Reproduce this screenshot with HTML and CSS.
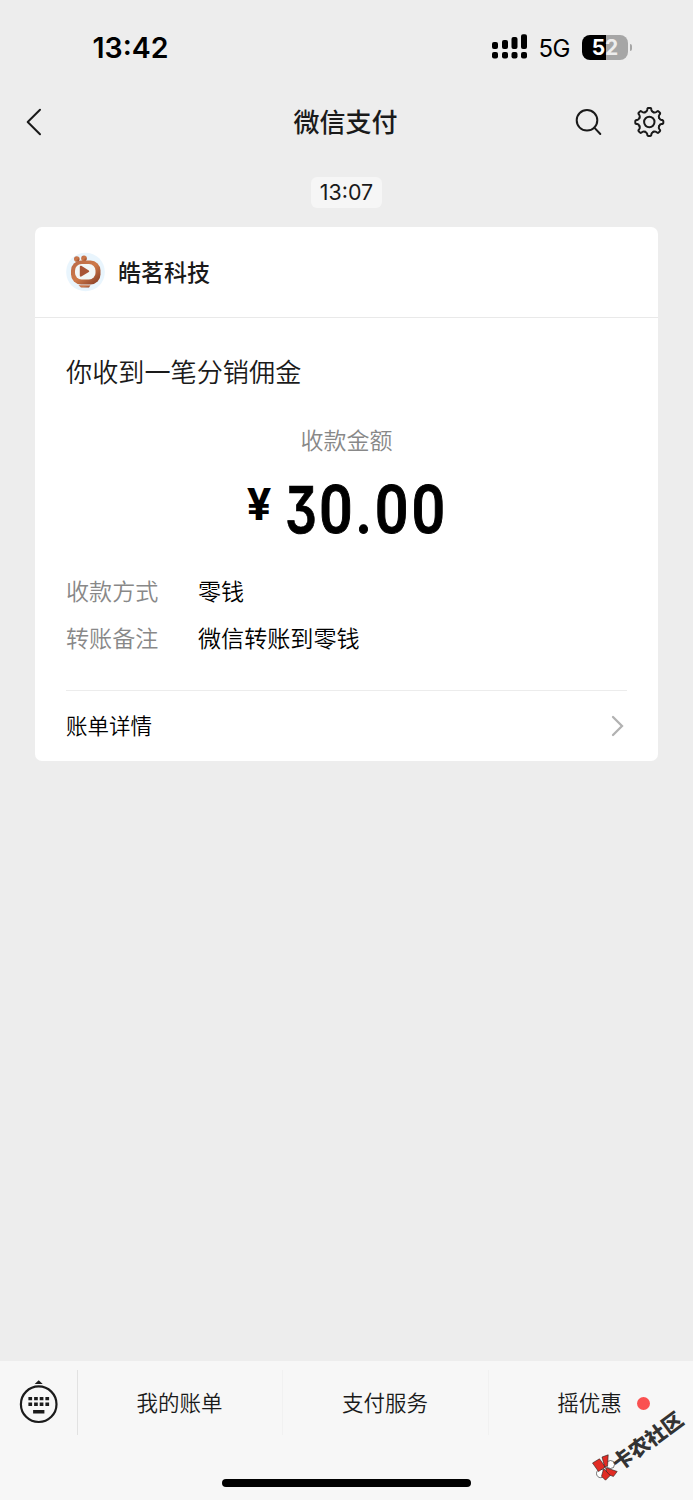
FILE: index.html
```html
<!DOCTYPE html>
<html lang="zh-CN">
<head>
<meta charset="utf-8">
<title>微信支付</title>
<link rel="stylesheet" href="styles.css">
</head>
<body>
<div class="phone">
  <header class="status">
    <span class="clock">13:42</span>
    <div class="indicators">
      <svg class="signal" width="36" height="26" viewBox="0 0 36 26">
        <rect x="0" y="8" width="6" height="7" rx="2"/><rect x="10" y="6" width="6" height="9" rx="2"/><rect x="19.5" y="3" width="6" height="12" rx="2"/><rect x="29" y="0.3" width="6" height="14.7" rx="2"/>
        <rect x="0" y="18" width="6" height="6.6" rx="2"/><rect x="10" y="18" width="6" height="6.6" rx="2"/><rect x="19.5" y="18" width="6" height="6.6" rx="2"/><rect x="29" y="18" width="6" height="6.6" rx="2"/>
      </svg>
      <span class="network">5G</span>
      <div class="battery"><span class="level">5<i>2</i></span><span class="nub"></span></div>
    </div>
  </header>

  <nav class="titlebar">
    <svg class="back" width="20" height="30" viewBox="0 0 20 30"><path d="M15 2.8 2.7 15l12.3 12.2"/></svg>
    <h1 class="title">微信支付</h1>
    <div class="actions">
      <svg width="30" height="30" viewBox="0 0 30 30"><circle cx="14" cy="13.3" r="10.3"/><path d="M21.3 20.6 27.3 27"/></svg>
      <svg width="32" height="32" viewBox="-16.3 -16 32 32">
        <defs><path id="tooth" d="M-4.05-9.8C-2.9-10.3-2.3-11-2.1-12L-1.9-13.3Q-1.7-14-1-14H1Q1.7-14 1.9-13.3L2.1-12C2.3-11 2.9-10.3 4.05-9.8"/></defs>
        <use href="#tooth"/><use href="#tooth" transform="rotate(45)"/><use href="#tooth" transform="rotate(90)"/><use href="#tooth" transform="rotate(135)"/><use href="#tooth" transform="rotate(180)"/><use href="#tooth" transform="rotate(225)"/><use href="#tooth" transform="rotate(270)"/><use href="#tooth" transform="rotate(315)"/>
        <circle r="5.2"/>
      </svg>
    </div>
  </nav>

  <main class="chat">
    <time class="stamp">13:07</time>
    <section class="card">
      <div class="merchant">
        <svg class="avatar" width="40" height="40" viewBox="0 0 40 40">
          <defs><linearGradient id="copper" x1="0" y1="0" x2="1" y2="1"><stop offset="0" stop-color="#b86849"/><stop offset=".5" stop-color="#ce7949"/><stop offset="1" stop-color="#803823"/></linearGradient></defs>
          <circle cx="20.5" cy="20" r="19.3" fill="#e9f5fd"/>
          <g fill="url(#copper)"><circle cx="11.8" cy="7" r="2.8"/><circle cx="19" cy="6.4" r="2.8"/><rect x="6" y="8.5" width="29.5" height="24" rx="10"/><path d="M13.5 33.2h12l-1.5 2.3h-8z"/></g>
          <rect x="10" y="12" width="20.5" height="15.5" rx="6.5" fill="#f3f6f7"/>
          <path d="M14.8 14.8q0-1.5 1.5-1L23.8 18.6q1 .8 0 1.5l-7.5 4.5q-1.5.5-1.5-1z" fill="#a95436"/>
        </svg>
        <span class="name">皓茗科技</span>
      </div>
      <div class="body">
        <h2 class="headline">你收到一笔分销佣金</h2>
        <p class="caption">收款金额</p>
        <p class="amount"><span class="yen">¥</span><span class="three">3</span><span class="digits">0.00</span></p>
        <dl class="details">
          <dt>收款方式</dt><dd>零钱</dd>
          <dt>转账备注</dt><dd>微信转账到零钱</dd>
        </dl>
        <div class="bill"><span>账单详情</span><svg width="16" height="24" viewBox="0 0 16 24"><path d="M3 3l9 9-9 9"/></svg></div>
      </div>
    </section>
  </main>

  <footer class="footer">
    <div class="menu">
      <div class="keyboard">
        <svg width="40" height="46" viewBox="0 0 40 46">
          <circle cx="19.7" cy="25.2" r="17.8" fill="none" stroke="#1b1b1b" stroke-width="2.2"/>
          <path d="M19.7 1.2l4 3.8h-8z"/><path d="M9.4 18h3.7v3.3H9.4zM15.1 18h3.7v3.3h-3.7zM20.7 18h3.7v3.3h-3.7zM26.4 18h3.7v3.3h-3.7zM9.4 23.4h3.7V27H9.4zM15.1 23.4h3.7V27h-3.7zM20.7 23.4h3.7V27h-3.7zM26.4 23.4h3.7V27h-3.7zM14.1 31h11.3v3.6H14.1z"/>
        </svg>
      </div>
      <div class="tab"><span>我的账单</span></div>
      <div class="tab"><span>支付服务</span></div>
      <div class="tab"><span>摇优惠</span><i class="dot"></i></div>
    </div>
    <div class="home"></div>
  </footer>

  <div class="watermark">
    <svg width="28" height="28" viewBox="0 0 28 28">
      <g stroke="#222" stroke-width=".6"><circle cx="18.5" cy="10.5" r="4" fill="#fff"/><circle cx="8.7" cy="19.5" r="4.2" fill="#fff"/><path d="M.5 9 7.5 4.8l5.8 8.2L6.5 17.5z" fill="#e12c24"/><path d="M10 3l6.2-2.2-.6 11L12.7 13z" fill="#e12c24"/><path d="M13.5 13.5l11.7 4-3.8 5L15 20z" fill="#e12c24"/><path d="M11.7 14.5l6.5 7-4.7 4.7-4-4z" fill="#e12c24"/></g>
    </svg>
    <span>卡农社区</span>
  </div>
</div>
</body>
</html>
```
FILE: styles.css
```css
* { box-sizing: border-box; margin: 0; padding: 0; }
body { background: #ededed; color: #1a1a1a; font-family: "Noto Sans CJK SC", sans-serif; }
.phone { position: relative; display: flex; flex-direction: column; width: 693px; height: 1500px; overflow: hidden; }

.status { display: flex; justify-content: space-between; align-items: center; height: 94px; padding: 0 61px 0 92.5px; font-family: Inter, sans-serif; color: #000; }
.clock { font-size: 28.5px; font-weight: 600; }
.indicators { display: flex; align-items: center; }
.signal { margin-right: 11px; }
.network { margin-right: 12px; padding-top: 2px; font-size: 24px; letter-spacing: -.5px; }
.battery { display: flex; align-items: center; gap: 2px; }
.level { width: 46px; height: 25px; border-radius: 8px; background: linear-gradient(90deg, #000 24px, #a6a6a6 24px); color: #fff; font-size: 21px; font-weight: 700; line-height: 25px; text-align: center; }
.level i { font-style: normal; color: #ededed; }
.nub { width: 2px; height: 7px; border-radius: 0 2px 2px 0; background: #a6a6a6; }

.titlebar { display: grid; grid-template-columns: 1fr auto 1fr; align-items: center; height: 56px; padding: 0 28px 0 25px; }
.titlebar svg { fill: none; stroke: #1a1a1a; stroke-width: 2; stroke-linecap: round; stroke-linejoin: round; }
.title { padding: 0 0 2px 1px; font-size: 26px; font-weight: 500; line-height: 36px; }
.actions { display: flex; justify-content: flex-end; align-items: center; gap: 30px; }

.chat { flex: 1; display: flex; flex-direction: column; align-items: center; padding-top: 27px; }
.stamp { width: 71px; height: 31px; border-radius: 6px; background: #f6f6f6; font: 21.4px/31px Inter, sans-serif; text-align: center; }
.card { width: 623px; height: 534px; margin-top: 19px; border-radius: 7px; background: #fff; }
.merchant { display: flex; align-items: center; gap: 13px; height: 91px; padding-left: 30px; border-bottom: 1px solid #e9e9e9; font-size: 23px; font-weight: 500; }
.name { padding-bottom: 2px; }
.body { padding: 35px 31px 0 31px; }
.headline { font-size: 26.15px; font-weight: 350; line-height: 36px; }
.caption { margin-top: 34px; color: #888; font-size: 23px; font-weight: 350; line-height: 32px; text-align: center; }
.amount { display: flex; height: 70px; margin-top: 17px; padding-left: 181px; color: #000; font: 500 66px/77px Roboto, sans-serif; }
.yen { width: 27px; margin-right: 11px; font: 700 45px/65px Roboto, sans-serif; }
.three { width: 34px; font: 600 64px/76px Inter, sans-serif; font-feature-settings: "cv09"; -webkit-text-stroke: .7px #000; transform: scaleX(.78); transform-origin: left; }
.digits { letter-spacing: 3.1px; -webkit-text-stroke: 1px #000; transform: scaleX(.9); transform-origin: left; }
.details { display: grid; grid-template-columns: 132px 1fr; row-gap: 15px; margin-top: 32px; font-size: 23.1px; font-weight: 350; line-height: 32px; }
.details dt { color: #888; }
.details dd { color: #000; }
.bill { display: flex; justify-content: space-between; align-items: center; height: 71px; margin-top: 37px; border-top: 1px solid #ececec; color: #000; font-size: 21.5px; font-weight: 350; }
.bill span { padding-bottom: 3px; }
.bill svg { margin-right: 1px; fill: none; stroke: #b2b2b2; stroke-width: 2.3; stroke-linecap: round; }

.footer { height: 139px; background: #f7f7f7; }
.menu { display: grid; grid-template-columns: 77px 205px 206px 205px; height: 65px; margin-top: 9px; }
.keyboard { padding: 9px 0 0 19px; fill: #1b1b1b; }
.tab { display: flex; justify-content: center; align-items: center; padding-right: 1px; border-left: 1px solid #f1f1f1; font-size: 21.5px; font-weight: 350; }
.tab span { padding-bottom: 2px; }
.keyboard + .tab { border-color: #e2e2e2; }
.dot { flex: none; width: 13px; height: 13px; margin: 1px 0 0 15px; border-radius: 50%; background: #fa5151; }
.tab:last-child { padding-left: 26px; }
.home { width: 249px; height: 8px; margin: 44px auto 0; border-radius: 4px; background: #000; }

.watermark { position: absolute; left: 592px; top: 1454px; display: flex; }
.watermark span { position: absolute; left: 19px; top: -10px; color: #333; font-size: 20.5px; font-weight: 900; line-height: 24px; white-space: nowrap; transform: rotate(-36.5deg); transform-origin: 14px 12px; }
```
